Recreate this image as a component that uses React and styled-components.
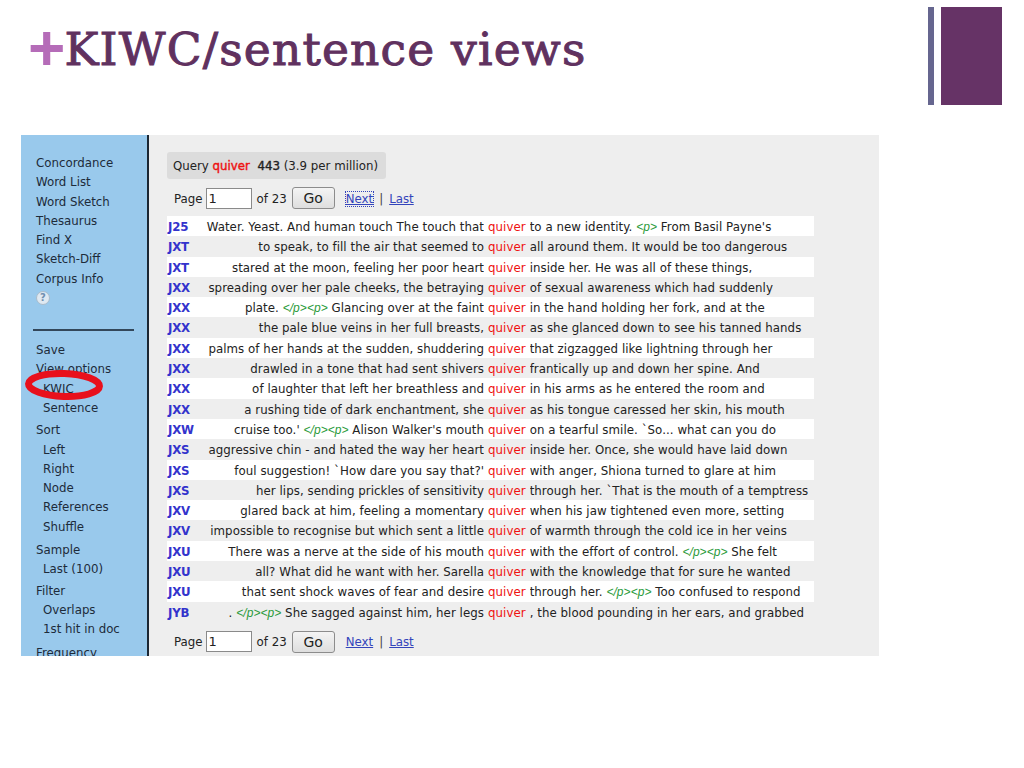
import styled, { createGlobalStyle } from "styled-components";

const GlobalStyle = createGlobalStyle`
  html, body {
    margin: 0;
    padding: 0;
    background: #fff;
  }
`;

const Slide = styled.div`
  width: 1024px;
  height: 768px;
  overflow: hidden;
  background: #fff;
`;

const Header = styled.header`
  height: 135px;
  box-sizing: border-box;
  padding: 7px 22px 0 28px;
  display: flex;
  justify-content: space-between;
  align-items: flex-start;
`;

const Title = styled.h1`
  margin: 8px 0 0;
  font-family: "DejaVu Serif", serif;
  font-size: 45.5px;
  line-height: 70px;
  font-weight: 400;
  letter-spacing: 1.2px;
  color: #60315f;
  white-space: nowrap;
  -webkit-text-stroke: 1px #60315f;
`;

const Plus = styled.span`
  font-family: "Liberation Sans", sans-serif;
  font-weight: 700;
  font-size: 64px;
  line-height: 0;
  letter-spacing: 0;
  color: #b56cb8;
  -webkit-text-stroke: 0;
  vertical-align: -5px;
  margin-right: -1px;
`;

const Decor = styled.div`
  display: flex;
  gap: 7px;
  height: 98px;
`;

const DecorBar = styled.div`
  width: 6px;
  background: #66668f;
`;

const DecorBlock = styled.div`
  width: 61px;
  background: #663366;
`;

const Panel = styled.section`
  width: 858px;
  height: 521px;
  margin-left: 21px;
  display: flex;
  overflow: hidden;
  background: #eeeeee;
  font-family: "DejaVu Sans", sans-serif;
  font-size: 11.8px;
  color: #222;
`;

const Sidebar = styled.nav`
  position: relative;
  width: 128px;
  flex: none;
  box-sizing: border-box;
  padding: 19px 0 0 15px;
  background: #99c9ec;
  border-right: 2px solid #1c2733;
`;

const Group = styled.div`
  margin-top: ${(p) => p.$gap || 0}px;
`;

const MenuItem = styled.div`
  height: 19.3px;
  line-height: 19.3px;
  padding-left: ${(p) => (p.$sub ? 7 : 0)}px;
  white-space: nowrap;
  color: #1d2b3a;
`;

const Help = styled.div`
  width: 14px;
  height: 14px;
  margin: 2px 0 3px 0;
  border-radius: 50%;
  background: #dfe9f2;
  border: 1px solid #a9bccb;
  box-sizing: border-box;
  color: #6f8fb0;
  font-size: 10px;
  font-weight: 700;
  line-height: 12px;
  text-align: center;
`;

const Rule = styled.hr`
  width: 101px;
  height: 2px;
  border: 0;
  margin: 24px 0 10px -3px;
  background: #33475a;
`;

const Ring = styled.svg`
  position: absolute;
  left: -1px;
  top: 224px;
`;

const Main = styled.main`
  flex: 1;
  min-width: 0;
  padding: 17px 0 0 18px;
`;

const QueryBox = styled.div`
  width: 219px;
  height: 27px;
  box-sizing: border-box;
  padding: 1px 0 0 6px;
  line-height: 27px;
  background: #dcdcdc;
  border-radius: 3px;
  white-space: pre;
`;

const Strong = styled.span`
  color: ${(p) => p.$color || "#222"};
  -webkit-text-stroke: 0.4px ${(p) => p.$color || "#222"};
`;

const Pager = styled.div`
  display: flex;
  align-items: center;
  height: 24px;
  margin: ${(p) => p.$margin};
  padding: 1px 0 0 7px;
  box-sizing: border-box;
  white-space: nowrap;
`;

const PageInput = styled.div`
  width: 46px;
  height: 21px;
  box-sizing: border-box;
  margin: -1px 5px 0 3px;
  padding-left: 2px;
  line-height: 19px;
  background: #fff;
  border: 1px solid #8a8a8a;
  font-size: 13px;
`;

const GoButton = styled.div`
  width: 43px;
  height: 22px;
  box-sizing: border-box;
  margin: -1px 11px 0 5px;
  border: 1px solid #8c8c8c;
  border-radius: 3px;
  background: linear-gradient(#f4f4f4, #dedede);
  font-size: 14px;
  line-height: 20px;
  text-align: center;
`;

const PageLink = styled.a`
  color: #3344bb;
  text-decoration: underline;
  outline: ${(p) => (p.$focus ? "1px dotted #3344bb" : "none")};
`;

const Pipe = styled.span`
  margin: 0 6px;
  color: #444;
`;

const Rows = styled.div`
  width: 647px;
`;

const Row = styled.div`
  display: grid;
  grid-template-columns: 30px 287px auto 1fr;
  height: 20.3px;
  line-height: 22.3px;
  letter-spacing: 0.05px;
  background: ${(p) => (p.$odd ? "#fff" : "transparent")};
  white-space: nowrap;
`;

const Ref = styled.span`
  padding-left: 1px;
  color: #3333cc;
  font-weight: 700;
  letter-spacing: -0.2px;
`;

const Left = styled.span`
  text-align: right;
  overflow: hidden;
`;

const Keyword = styled.span`
  margin: 0 4px;
  color: #ee1111;
`;

const Right = styled.span`
  overflow: hidden;
`;

const Tag = styled.i`
  font-family: "Liberation Sans", sans-serif;
  font-size: 12px;
  color: #2a9a3a;
`;

const rows = [
  ["J25", "Water. Yeast. And human touch The touch that", "to a new identity. |<p>| From Basil Payne's"],
  ["JXT", "to speak, to fill the air that seemed to", "all around them. It would be too dangerous"],
  ["JXT", "stared at the moon, feeling her poor heart", "inside her. He was all of these things,"],
  ["JXX", "spreading over her pale cheeks, the betraying", "of sexual awareness which had suddenly"],
  ["JXX", "plate. |</p><p>| Glancing over at the faint", "in the hand holding her fork, and at the"],
  ["JXX", "the pale blue veins in her full breasts,", "as she glanced down to see his tanned hands"],
  ["JXX", "palms of her hands at the sudden, shuddering", "that zigzagged like lightning through her"],
  ["JXX", "drawled in a tone that had sent shivers", "frantically up and down her spine. And"],
  ["JXX", "of laughter that left her breathless and", "in his arms as he entered the room and"],
  ["JXX", "a rushing tide of dark enchantment, she", "as his tongue caressed her skin, his mouth"],
  ["JXW", "cruise too.' |</p><p>| Alison Walker's mouth", "on a tearful smile. `So... what can you do"],
  ["JXS", "aggressive chin - and hated the way her heart", "inside her. Once, she would have laid down"],
  ["JXS", "foul suggestion! `How dare you say that?'", "with anger, Shiona turned to glare at him"],
  ["JXS", "her lips, sending prickles of sensitivity", "through her. `That is the mouth of a temptress"],
  ["JXV", "glared back at him, feeling a momentary", "when his jaw tightened even more, setting"],
  ["JXV", "impossible to recognise but which sent a little", "of warmth through the cold ice in her veins"],
  ["JXU", "There was a nerve at the side of his mouth", "with the effort of control. |</p><p>| She felt"],
  ["JXU", "all? What did he want with her. Sarella", "with the knowledge that for sure he wanted"],
  ["JXU", "that sent shock waves of fear and desire", "through her. |</p><p>| Too confused to respond"],
  ["JYB", ". |</p><p>| She sagged against him, her legs", ", the blood pounding in her ears, and grabbed"],
];

// "|" marks the corpus tags inside a line
const withTags = (text) =>
  text.split("|").map((part, i) => (i % 2 ? <Tag key={i}>{part}</Tag> : part));

const PagerRow = ({ margin, focus }) => (
  <Pager $margin={margin}>
    Page
    <PageInput>1</PageInput>
    of 23
    <GoButton>Go</GoButton>
    <PageLink $focus={focus}>Next</PageLink>
    <Pipe>|</Pipe>
    <PageLink>Last</PageLink>
  </Pager>
);

const App = () => {
  return (
    <Slide>
      <GlobalStyle />
      <Header>
        <Title>
          <Plus>+</Plus>KIWC/sentence views
        </Title>
        <Decor>
          <DecorBar />
          <DecorBlock />
        </Decor>
      </Header>
      <Panel>
        <Sidebar>
          <MenuItem>Concordance</MenuItem>
          <MenuItem>Word List</MenuItem>
          <MenuItem>Word Sketch</MenuItem>
          <MenuItem>Thesaurus</MenuItem>
          <MenuItem>Find X</MenuItem>
          <MenuItem>Sketch-Diff</MenuItem>
          <MenuItem>Corpus Info</MenuItem>
          <Help>?</Help>
          <Rule />
          <MenuItem>Save</MenuItem>
          <MenuItem>View options</MenuItem>
          <MenuItem $sub>KWIC</MenuItem>
          <MenuItem $sub>Sentence</MenuItem>
          <Group $gap={3}>
            <MenuItem>Sort</MenuItem>
            <MenuItem $sub>Left</MenuItem>
            <MenuItem $sub>Right</MenuItem>
            <MenuItem $sub>Node</MenuItem>
            <MenuItem $sub>References</MenuItem>
            <MenuItem $sub>Shuffle</MenuItem>
          </Group>
          <Group $gap={4}>
            <MenuItem>Sample</MenuItem>
            <MenuItem $sub>Last (100)</MenuItem>
          </Group>
          <Group $gap={2}>
            <MenuItem>Filter</MenuItem>
            <MenuItem $sub>Overlaps</MenuItem>
            <MenuItem $sub>1st hit in doc</MenuItem>
          </Group>
          <Group $gap={4}>
            <MenuItem>Frequency</MenuItem>
          </Group>
          <Ring width="88" height="50" viewBox="0 0 88 50">
            <ellipse cx="44" cy="26" rx="35.5" ry="11.5" fill="none" stroke="#e8101c" strokeWidth="7" transform="rotate(2 44 26)" />
          </Ring>
        </Sidebar>
        <Main>
          <QueryBox>
            Query <Strong $color="#ee1111">quiver</Strong>{"  "}
            <Strong>443</Strong> (3.9 per million)
          </QueryBox>
          <PagerRow margin="7px 0 6px" focus />
          <Rows>
            {rows.map(([ref, left, right], i) => (
              <Row key={i} $odd={i % 2 === 0}>
                <Ref>{ref}</Ref>
                <Left>{withTags(left)}</Left>
                <Keyword>quiver</Keyword>
                <Right>{withTags(right)}</Right>
              </Row>
            ))}
          </Rows>
          <PagerRow margin="8px 0 0" />
        </Main>
      </Panel>
    </Slide>
  );
};

export default App;
